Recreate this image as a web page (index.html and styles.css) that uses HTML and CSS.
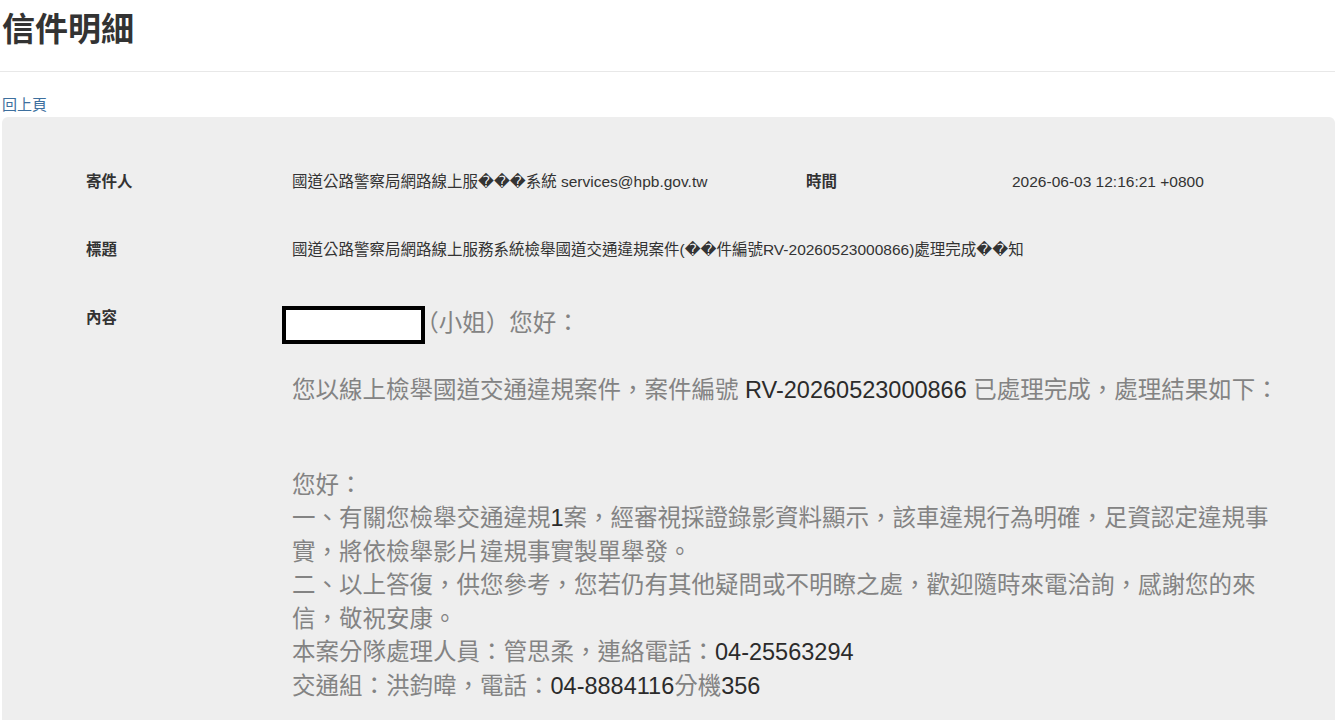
FILE: index.html
```html
<!DOCTYPE html>
<html lang="zh-Hant">
<head>
<meta charset="utf-8">
<title>信件明細</title>
<link rel="stylesheet" href="styles.css">
</head>
<body>
<header class="page-header">
  <h1 class="title">信件明細</h1>
</header>
<a class="back" href="#">回上頁</a>
<section class="well">
  <div class="meta">
    <div class="label">寄件人</div>
    <div class="value">國道公路警察局網路線上服���系統 services@hpb.gov.tw</div>
    <div class="label">時間</div>
    <div class="value">2026-06-03 12:16:21 +0800</div>

    <div class="label">標題</div>
    <div class="value wide">國道公路警察局網路線上服務系統檢舉國道交通違規案件(��件編號RV-20260523000866)處理完成��知</div>

    <div class="label">內容</div>
    <div class="value wide body">
      <p class="para greet"><span class="redact"></span><span class="half">（</span>小姐）您好：</p>
      <p class="para intro">您以線上檢舉國道交通違規案件，案件編號 <span class="num">RV-20260523000866</span> 已處理完成，處理結果如下：</p>
      <p class="para reply">您好：<br>一、有關您檢舉交通違規<span class="num">1</span>案，經審視採證錄影資料顯示，該車違規行為明確，足資認定違規事實，將依檢舉影片違規事實製單舉發。<br>二、以上答復，供您參考，您若仍有其他疑問或不明瞭之處，歡迎隨時來電洽詢，感謝您的來信，敬祝安康。<br>本案分隊處理人員：管思柔，連絡電話：<span class="num">04-25563294</span><br>交通組：洪鈞暐，電話：<span class="num">04-8884116</span>分機<span class="num">356</span></p>
    </div>
  </div>
</section>
</body>
</html>
```

FILE: styles.css
```css
html, body {
  margin: 0;
  padding: 0;
  background: #ffffff;
}

body {
  font-family: "Liberation Sans", "Noto Sans CJK TC", "DejaVu Sans", sans-serif;
  color: #333333;
  font-size: 15.5px;
}

.page-header {
  padding: 12px 0 23px 2px;
  border-bottom: 1px solid #e8e8e8;
}

.title {
  margin: 0;
  font-size: 33px;
  line-height: 36px;
  font-weight: 700;
  color: #333333;
}

.back {
  display: block;
  margin-top: 23px;
  margin-left: 2px;
  width: max-content;
  font-size: 15px;
  line-height: 20px;
  color: #3d6f9e;
  text-decoration: none;
}

.well {
  margin: 2px 0 0 2px;
  background: #eeeeee;
  border-radius: 6px;
  padding: 31px 0 60px 84px;
  min-height: 560px;
}

.meta {
  display: grid;
  grid-template-columns: 206px 514px 206px 1fr;
}

.label {
  font-weight: 700;
  line-height: 22px;
  padding: 23px 0;
}

.value {
  line-height: 22px;
  padding: 23px 0;
}

.wide {
  grid-column: 2 / 5;
}

.body {
  max-width: 992px;
  font-size: 23.5px;
  line-height: 33.5px;
  color: #838383;
}

.para {
  margin: 0;
}

.intro {
  margin-top: 33.5px;
}

.reply {
  margin-top: 61px;
}

.num {
  color: #2b2b2b;
}

.half {
  font-feature-settings: "halt";
}

.redact {
  display: inline-block;
  width: 135px;
  height: 30px;
  border: 4px solid #000000;
  background: #ffffff;
  vertical-align: middle;
  margin: -8px 2px -8px -10px;
}
```
